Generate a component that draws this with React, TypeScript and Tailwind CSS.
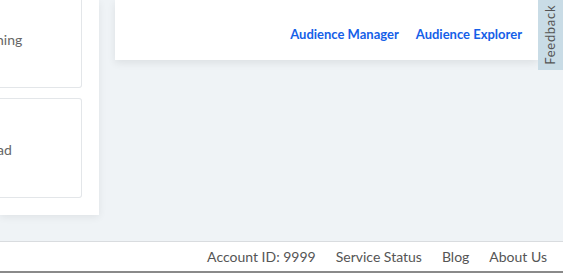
import React from 'react';

const Feedback = () => (
    <div className="absolute right-0 top-0 w-[25px] h-[70px] bg-[#c9dce6] flex items-center justify-center">
        <span className="-rotate-90 whitespace-nowrap text-[13px] text-[#555] tracking-[0.7px]">Feedback</span>
    </div>
);

export default function App() {
    return (
        <div className="relative w-[563px] h-[279px] overflow-hidden bg-white font-['Lato',sans-serif]">
            <div className="h-[241px] bg-[#eff3f6] flex items-start">
                {/* left panel, cards run off the left edge */}
                <div className="w-[99px] h-[215px] bg-white shadow-[0_2px_8px_rgba(0,0,0,0.07)] flex flex-col gap-[10px] pr-[17px]">
                    <div className="h-[100px] -mt-[12px] flex-none border border-l-0 border-[#e3e6e9] rounded-r-[3px] flex items-end pb-[37px] overflow-hidden">
                        <span className="-ml-[4px] text-[14px] text-[#666]">ning</span>
                    </div>
                    <div className="h-[100px] flex-none border border-l-0 border-[#e3e6e9] rounded-r-[3px] flex items-center pt-[2px] overflow-hidden">
                        <span className="-ml-[3px] text-[14px] text-[#666]">ad</span>
                    </div>
                </div>
                <div className="ml-[16px] w-[423px] h-[60px] bg-white shadow-[0_3px_8px_rgba(0,0,0,0.08)] flex items-end justify-end gap-[17px] pr-[16px] pb-[16px]">
                    <a className="text-[13px] font-bold text-[#1560e8]">Audience Manager</a>
                    <a className="text-[13px] font-bold text-[#1560e8]">Audience Explorer</a>
                </div>
            </div>
            <div className="h-[32px] border-t border-b-2 border-t-[#d9dcdf] border-b-[#8a8a8a] bg-white flex items-center justify-end gap-[20px] pr-[16px] text-[14px] text-[#555]">
                <span>Account ID: 9999</span>
                <span>Service Status</span>
                <span>Blog</span>
                <span>About Us</span>
            </div>
            <Feedback />
        </div>
    );
}
